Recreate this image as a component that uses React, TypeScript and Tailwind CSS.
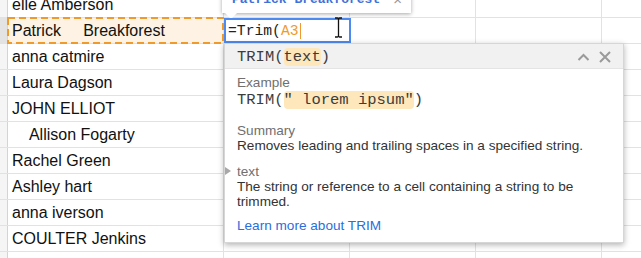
import React from 'react';

const rows = [
  { name: 'elle Amberson' },
  { name: 'Patrick     Breakforest', active: true },
  { name: 'anna catmire' },
  { name: 'Laura Dagson' },
  { name: 'JOHN ELLIOT' },
  { name: '    Allison Fogarty' },
  { name: 'Rachel Green' },
  { name: 'Ashley hart' },
  { name: 'anna iverson' },
  { name: 'COULTER Jenkins' },
  { name: '' },
];

const mono = { fontFamily: '"Liberation Mono", "DejaVu Sans Mono", monospace' };

function HelpPopup() {
  return (
    <div className="absolute left-[224px] top-[43px] w-[400px] h-[200px] bg-white border border-[#d6d6d6] shadow-[0_2px_6px_rgba(0,0,0,0.3)]">
      {/* Header */}
      <div className="flex h-[25px] items-center justify-between border-b border-[#e4e4e4] bg-[#f1f1f1] pl-[12px] pr-[12px] pt-[2px]">
        <div className="text-[15.5px] leading-[18px] text-[#3c3c3c]" style={mono}>
          TRIM(<span className="inline-block rounded-[4px] bg-[#fde7bb]">text</span>)
        </div>
        <div className="flex items-center gap-[9px] text-[#9a9a9a]">
          <svg width="13" height="8" viewBox="0 0 13 8">
            <path d="M1.5 7 L6.5 2 L11.5 7" fill="none" stroke="currentColor" strokeWidth="2" />
          </svg>
          <svg width="12" height="12" viewBox="0 0 12 12">
            <path d="M1 1 L11 11 M11 1 L1 11" fill="none" stroke="currentColor" strokeWidth="2" />
          </svg>
        </div>
      </div>

      {/* Body */}
      <div className="pl-[12px] pr-[12px] pt-[6px] text-[13.6px] leading-[15px] text-[#333]">
        <div className="text-[#707070]">Example</div>
        <div className="mt-[1px] text-[15.5px] leading-[18px] text-[#3c3c3c]" style={mono}>
          TRIM(<span className="inline-block rounded-[4px] bg-[#fde7bb]">" lorem ipsum"</span>)
        </div>

        <div className="mt-[14px] text-[#707070]">Summary</div>
        <div>Removes leading and trailing spaces in a specified string.</div>

        <div className="relative mt-[11px] text-[#707070]">
          <span className="absolute -left-[12px] top-[3px] h-0 w-0 border-y-[4px] border-l-[6px] border-y-transparent border-l-[#a8a8a8]" />
          text
        </div>
        <div>
          The string or reference to a cell containing a string to be
          <br />
          trimmed.
        </div>

        <div className="mt-[9px] text-[#2a6fdb]">Learn more about TRIM</div>
      </div>
    </div>
  );
}

export default function App() {
  return (
    <div
      className="relative h-[258px] w-[641px] overflow-hidden bg-white"
      style={{ fontFamily: '"Liberation Sans", Arial, sans-serif' }}
    >
      {/* Grid */}
      <div className="-mt-[8px] flex flex-col">
        {rows.map((r, i) => (
          <div key={i} className="flex h-[26px] border-b border-[#e2e2e2]">
            <div
              className={`w-[8px] shrink-0 border-r border-[#d4d4d4] ${
                r.active ? 'bg-[#e3e3e3]' : 'bg-[#f5f5f5]'
              }`}
            />
            <div
              className={`relative flex w-[216px] shrink-0 items-center border-r border-[#e2e2e2] pl-[4px] text-[16px] text-[#111] whitespace-pre ${
                r.active ? 'bg-[#fdf2e4]' : ''
              }`}
            >
              {r.name}
              {r.active && (
                <svg className="absolute -left-[1px] -top-[1px]" width="217" height="27">
                  <rect x="1" y="1" width="215" height="25" fill="none" stroke="#f09a2c" strokeWidth="2" strokeDasharray="7 4" />
                </svg>
              )}
            </div>
            <div className="w-[126px] shrink-0 border-r border-[#e2e2e2]" />
            <div className="w-[126px] shrink-0 border-r border-[#e2e2e2]" />
            <div className="w-[126px] shrink-0 border-r border-[#e2e2e2]" />
            <div className="flex-1" />
          </div>
        ))}
      </div>

      {/* Value tooltip above editor */}
      <div className="absolute left-[222px] top-[-22px] h-[35px] w-[189px] bg-white shadow-[0_1px_4px_rgba(0,0,0,0.35)]">
        <div className="flex items-center justify-between whitespace-nowrap pl-[10px] pr-[9px] pt-[14px]">
          <span className="text-[13px] font-bold leading-[16px] text-[#3f72d8]" style={mono}>
            Patrick Breakforest
          </span>
          <span className="text-[15px] leading-[16px] text-[#999]">×</span>
        </div>
        <span className="absolute left-[3px] top-[35px] h-0 w-0 border-x-[6px] border-t-[6px] border-x-transparent border-t-white" />
      </div>

      {/* Formula editor cell */}
      <div className="absolute left-[224px] top-[18px] flex h-[25px] w-[127px] items-center border-2 border-[#4d8af0] bg-white pl-[2px]">
        <span className="text-[14.7px] leading-[18px] text-[#222]" style={mono}>
          =Trim(<span className="text-[#f09a2c]">A3</span>
        </span>
        <span className="ml-[1px] h-[16px] w-[1px] bg-[#f09a2c]" />
        <svg className="absolute left-[108px] top-[-3px]" width="9" height="21" viewBox="0 0 9 21">
          <path d="M1 1 H3.5 Q4.5 1 4.5 2.5 V18.5 Q4.5 20 3.5 20 H1 M8 1 H5.5 Q4.5 1 4.5 2.5 M4.5 18.5 Q4.5 20 5.5 20 H8" fill="none" stroke="#111" strokeWidth="1.3" />
        </svg>
      </div>

      <HelpPopup />
    </div>
  );
}
